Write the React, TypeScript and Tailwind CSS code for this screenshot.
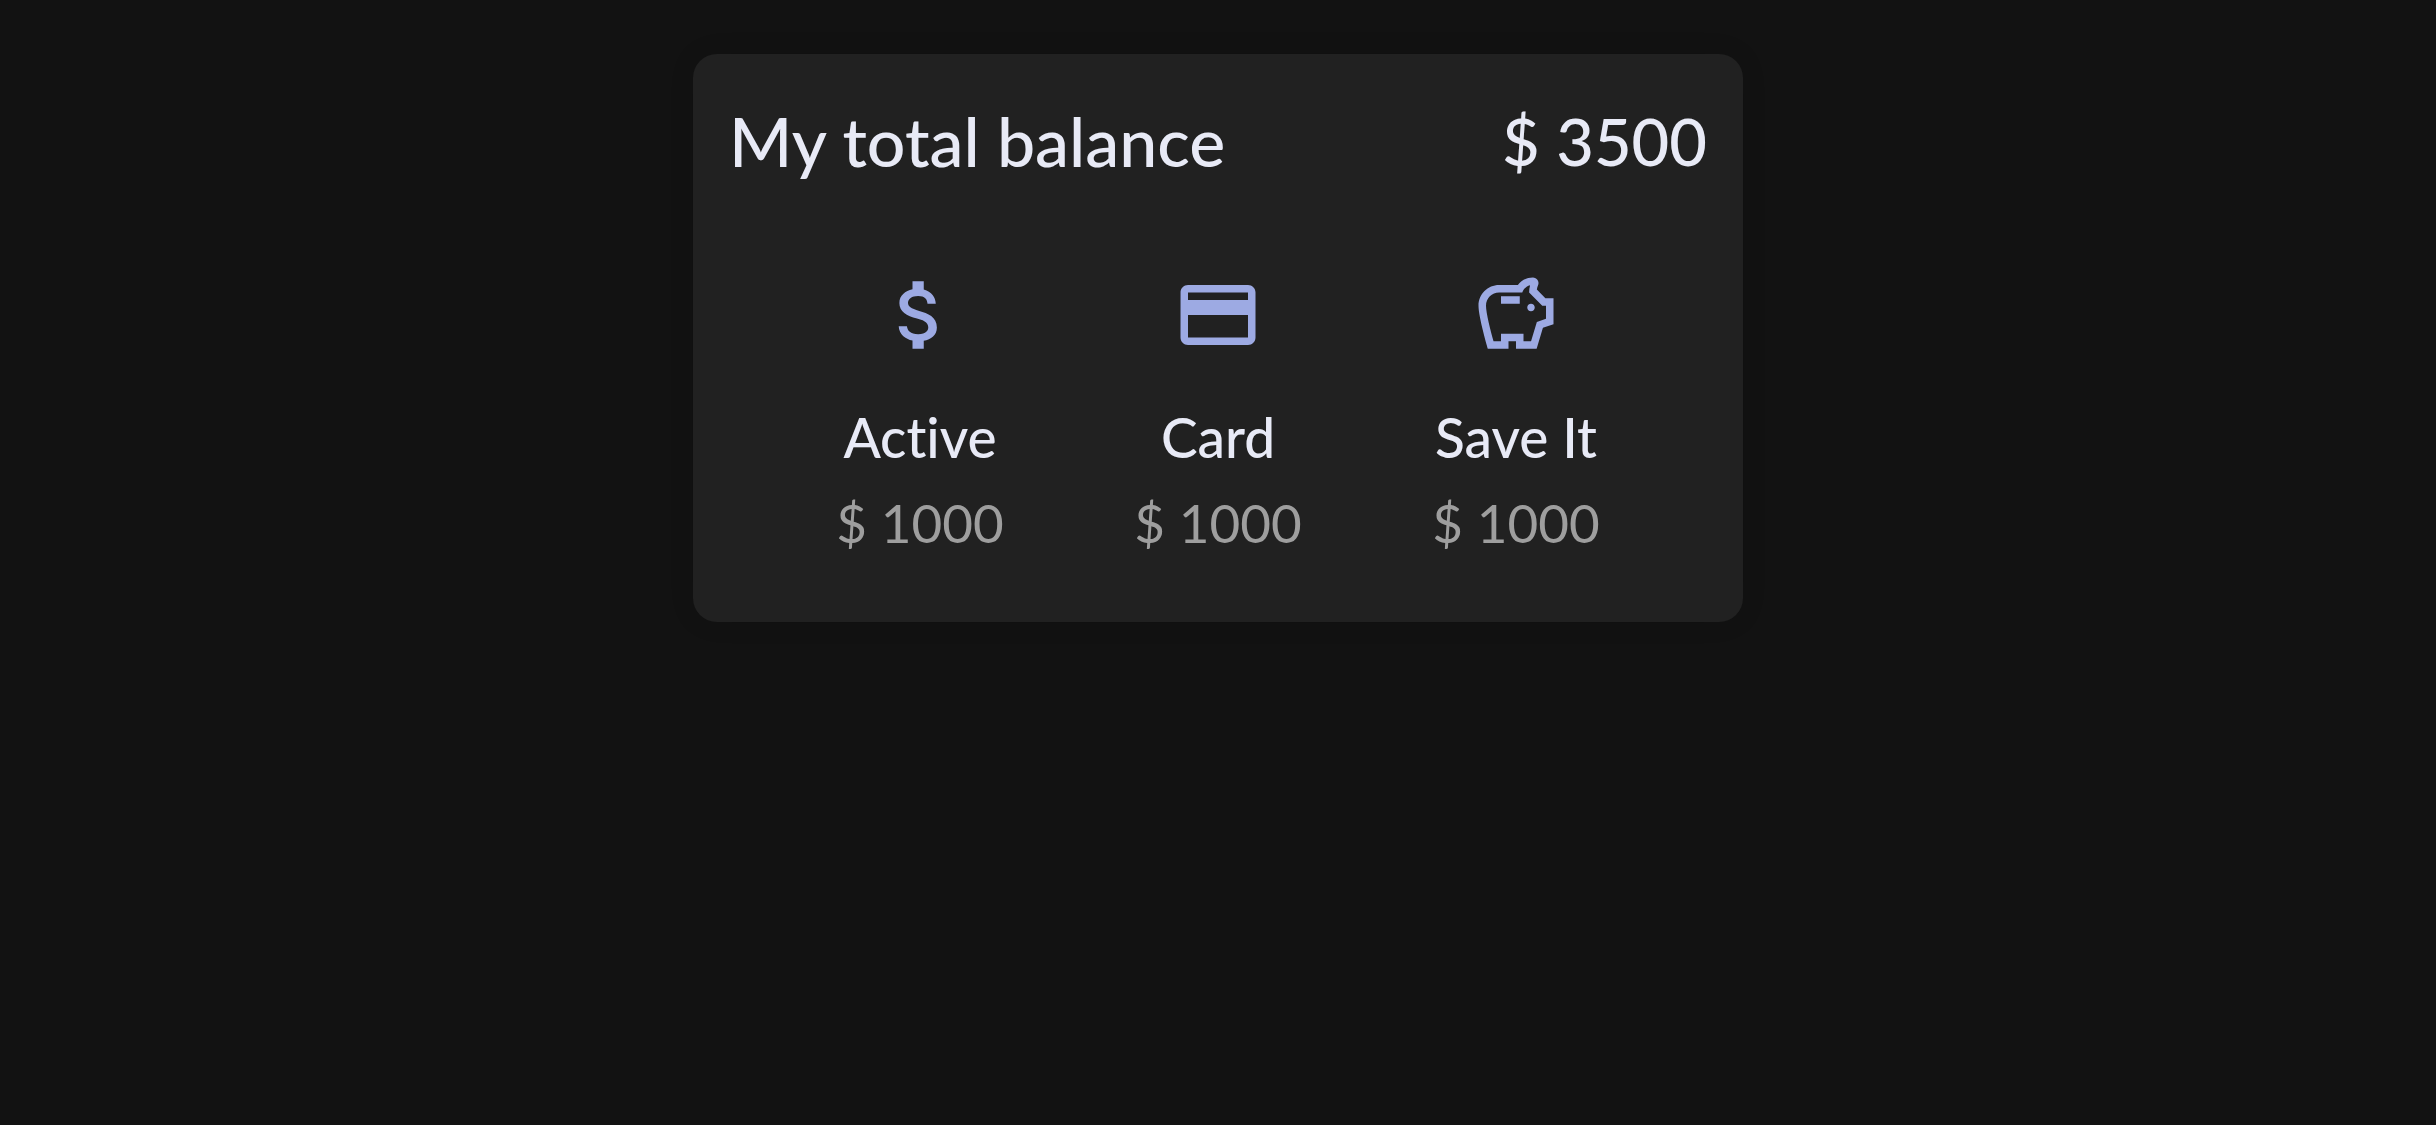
import type { IconType } from "react-icons";
import { MdAttachMoney, MdCreditCard, MdOutlineSavings } from "react-icons/md";

type Account = { label: string; amount: string; Icon: IconType };

const accounts: Account[] = [
  { label: "Active", amount: "$ 1000", Icon: MdAttachMoney },
  { label: "Card", amount: "$ 1000", Icon: MdCreditCard },
  { label: "Save It", amount: "$ 1000", Icon: MdOutlineSavings },
];

function AccountColumn({ label, amount, Icon }: Account) {
  return (
    <li className="flex flex-col items-center leading-[86px]">
      <Icon className="mb-[34px] size-[90px] text-[#9daae3]" aria-hidden="true" />
      <span className="text-[55px] font-medium text-[#e8eaf6] [font-variant-ligatures:none]">{label}</span>
      <span className="text-[53px] text-[#9e9e9e]">{amount}</span>
    </li>
  );
}

export default function App() {
  return (
    <main className="min-h-screen bg-[#121212] px-9 pt-[54px] font-['Lato',sans-serif]">
      <section className="mx-auto max-w-[1050px] rounded-3xl bg-[#212121] pt-[42px] pb-14 shadow-[0_0_24px_rgba(0,0,0,0.12)]">
        <header className="flex items-center justify-between px-9 font-medium leading-[90px] text-[#e8eaf6]">
          <h1 className="text-[68px]">My total balance</h1>
          <p className="text-[65px]">$ 3500</p>
        </header>
        <ul className="mt-[84px] grid grid-cols-3 px-[78px]">
          {accounts.map((account) => (
            <AccountColumn key={account.label} {...account} />
          ))}
        </ul>
      </section>
    </main>
  );
}
